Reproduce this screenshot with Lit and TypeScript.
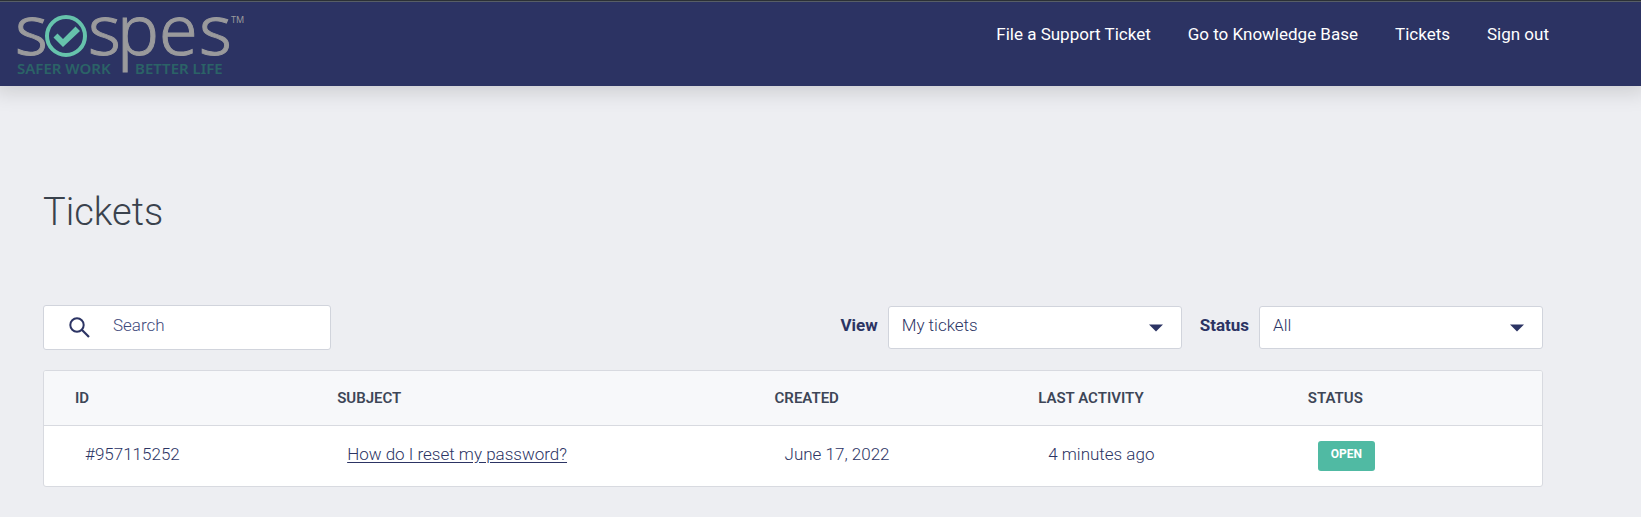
import { LitElement, html, css } from "lit";
import { customElement, state } from "lit/decorators.js";

interface Ticket {
  id: string;
  subject: string;
  created: string;
  activity: string;
  status: string;
}

const caret = html`<svg class="caret" width="14" height="8" viewBox="0 0 14 8" aria-hidden="true">
  <path d="M0 0.5H14L7 7.5Z" fill="#2c3464" />
</svg>`;

@customElement("app-root")
export class AppRoot extends LitElement {
  @state() private tickets: Ticket[] = [
    {
      id: "#957115252",
      subject: "How do I reset my password?",
      created: "June 17, 2022",
      activity: "4 minutes ago",
      status: "OPEN",
    },
  ];

  static styles = css`
    :host {
      display: block;
      min-height: 100vh;
      background: #edeef2;
      color: #2c3464;
      font-family: Roboto, "Noto Sans", sans-serif;
      font-size: 17px;
      line-height: 24px;
      font-weight: 300;
    }
    * {
      box-sizing: border-box;
    }
    .header {
      display: flex;
      justify-content: space-between;
      align-items: flex-start;
      padding: 12px 92px 8px 16px;
      border-top: 1px solid #2b3036;
      background: #2c3363;
      box-shadow: inset 0 1px 0 #575e66, 0 0 20px 6px rgba(0, 0, 0, 0.14);
    }
    .logo {
      display: block;
      height: 65px;
      overflow: visible;
    }
    .mark {
      font-family: "Noto Sans", sans-serif;
      font-size: 70px;
      font-weight: 300;
      fill: #9a9a9c;
      stroke: #9a9a9c;
      stroke-width: 1px;
    }
    .tm {
      font-family: "Noto Sans", sans-serif;
      font-size: 9px;
      font-weight: 400;
      fill: #9a9a9c;
    }
    .tagline {
      font-family: "Noto Sans", sans-serif;
      font-size: 15px;
      font-weight: 600;
      fill: #2b6367;
    }
    .nav {
      display: flex;
      gap: 37px;
      padding-top: 9px;
    }
    .nav a {
      color: #fff;
      font-weight: 400;
      text-decoration: none;
    }
    .page {
      padding: 102px 98px 30px 43px;
    }
    h1 {
      margin: 0 0 69px;
      font-size: 38px;
      line-height: 48px;
      font-weight: 300;
      color: #3a424d;
    }
    .toolbar {
      display: flex;
      justify-content: space-between;
      align-items: center;
      margin-bottom: 20px;
    }
    .search {
      display: flex;
      align-items: center;
      gap: 23px;
      width: 288px;
      height: 45px;
      padding: 0 24px 0 25px;
      border: 1px solid #d1d4dc;
      border-radius: 3px;
      background: #fff;
    }
    .search input {
      flex: 1;
      min-width: 0;
      height: 36px;
      padding: 0 0 6px;
      border: 0;
      outline: 0;
      background: none;
      font: inherit;
      color: #2c3464;
    }
    .search input::placeholder {
      color: #3f4a7c;
      opacity: 1;
    }
    .filters {
      display: flex;
      align-items: center;
    }
    .filters label {
      padding: 0 10px 6px 0;
      font-weight: 700;
    }
    .select {
      display: grid;
      align-items: center;
      height: 43px;
      margin-right: 18px;
    }
    .select:last-child {
      margin-right: 0;
    }
    .view {
      width: 294px;
    }
    .status {
      width: 284px;
    }
    .select select {
      grid-area: 1 / 1;
      width: 100%;
      height: 43px;
      padding: 0 40px 6px 13px;
      border: 1px solid #d1d4dc;
      border-radius: 3px;
      background: #fff;
      appearance: none;
      font: inherit;
      color: #2c3464;
    }
    .caret {
      grid-area: 1 / 1;
      justify-self: end;
      margin-right: 19px;
      pointer-events: none;
    }
    .card {
      border: 1px solid #d8dae0;
      border-radius: 3px;
      background: #fff;
      overflow: hidden;
    }
    table {
      width: 100%;
      border-collapse: separate;
      border-spacing: 0;
      table-layout: fixed;
    }
    th {
      padding: 15px 0 15px 31px;
      border-bottom: 1px solid #d8dae0;
      background: #f7f8fa;
      color: #3d4657;
      font-size: 15px;
      font-weight: 600;
      text-align: left;
      text-transform: uppercase;
    }
    td {
      padding: 15px 0 15px 41px;
      line-height: 26px;
      vertical-align: top;
    }
    td a {
      color: inherit;
      text-underline-offset: 2px;
    }
    .c1 { width: 17.5%; }
    .c2 { width: 29.2%; }
    .c3 { width: 17.6%; }
    .c4 { width: 18%; }
    .badge {
      display: block;
      width: 57px;
      height: 30px;
      padding-bottom: 4px;
      border-radius: 3px;
      background: #50baa3;
      color: #fff;
      font-size: 12px;
      line-height: 26px;
      font-weight: 700;
      text-align: center;
    }
  `;

  render() {
    return html`
      <header class="header">
        <svg class="logo" width="232" height="65" viewBox="16 13 232 65" role="img" aria-label="sospes">
          <text class="mark" x="15" y="55">s</text>
          <circle cx="66" cy="36" r="19" fill="none" stroke="#66c3ac" stroke-width="4" />
          <path d="M53.500 37.500L57.500 33.500L63 39L75.500 26.500L80 31L63 47Z" fill="#66c3ac" />
          <text class="mark" x="88 117 159 199" y="55">spes</text>
          <text class="tm" x="231" y="23">TM</text>
          <text class="tagline" x="17" y="74">SAFER WORK</text>
          <text class="tagline" x="135" y="74">BETTER LIFE</text>
        </svg>
        <nav class="nav">
          <a href="#new">File a Support Ticket</a>
          <a href="#kb">Go to Knowledge Base</a>
          <a href="#tickets">Tickets</a>
          <a href="#signout">Sign out</a>
        </nav>
      </header>
      <main class="page">
        <h1>Tickets</h1>
        <div class="toolbar">
          <div class="search">
            <svg width="21" height="21" viewBox="0 0 21 21" aria-hidden="true">
              <circle cx="8" cy="8" r="6.700" fill="none" stroke="#2c3464" stroke-width="2" />
              <path d="M12.800 12.800L20 20" stroke="#2c3464" stroke-width="2.200" />
            </svg>
            <input type="text" placeholder="Search" aria-label="Search" />
          </div>
          <div class="filters">
            <label for="view">View</label>
            <div class="select view">
              <select id="view"><option>My tickets</option></select>
              ${caret}
            </div>
            <label for="status">Status</label>
            <div class="select status">
              <select id="status"><option>All</option></select>
              ${caret}
            </div>
          </div>
        </div>
        <div class="card">
          <table>
            <thead>
              <tr>
                <th class="c1">ID</th>
                <th class="c2">Subject</th>
                <th class="c3">Created</th>
                <th class="c4">Last activity</th>
                <th>Status</th>
              </tr>
            </thead>
            <tbody>
              ${this.tickets.map(
                (t) => html`<tr>
                  <td>${t.id}</td>
                  <td><a href="#ticket">${t.subject}</a></td>
                  <td>${t.created}</td>
                  <td>${t.activity}</td>
                  <td><span class="badge">${t.status}</span></td>
                </tr>`
              )}
            </tbody>
          </table>
        </div>
      </main>
    `;
  }
}
